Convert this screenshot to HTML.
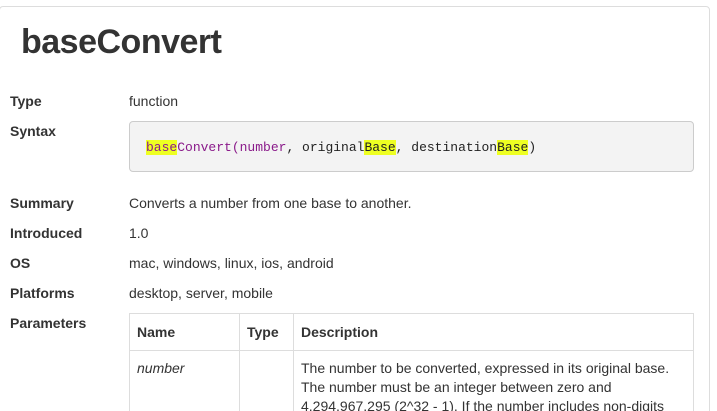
<!DOCTYPE html>
<html><head><meta charset="utf-8"><style>
*{margin:0;padding:0;box-sizing:border-box}
html,body{width:717px;height:411px;overflow:hidden}
body{background:#fff;font-family:"Liberation Sans",sans-serif;color:#333;font-size:14px;position:relative}
.panel{position:absolute;left:-1px;top:6px;width:711px;height:420px;border:1px solid #ddd;border-radius:4px}
h1{position:absolute;left:21px;top:23px;font-size:34px;font-weight:bold;color:#333;letter-spacing:-0.5px}
.l{position:absolute;left:10px;font-weight:bold;font-size:14px;color:#333}
.v{position:absolute;left:129px;font-size:14px;color:#333}
.code{position:absolute;left:129px;top:121px;width:565px;height:51px;background:#f3f3f3;border:1px solid #ccc;border-radius:4px;font-family:"Liberation Mono",monospace;font-size:13px;padding:18px 0 0 16px;color:#222}
.p{color:#8a1a8a}.h{background:#eeff22}
table{position:absolute;left:129px;top:313px;width:565px;border-collapse:collapse;font-size:14px}
td,th{border:1px solid #ddd;text-align:left;vertical-align:top;padding:8px 7px;line-height:19px}
th{height:37px;padding-top:9px}
</style></head><body>
<div class="panel"></div>
<h1>baseConvert</h1>
<div class="l" style="top:93px">Type</div><div class="v" style="top:93px">function</div>
<div class="l" style="top:123px">Syntax</div>
<div class="code"><span class="p"><span class="h">base</span>Convert(number</span>, original<span class="h">Base</span>, destination<span class="h">Base</span>)</div>
<div class="l" style="top:195px">Summary</div><div class="v" style="top:195px">Converts a number from one base to another.</div>
<div class="l" style="top:225px">Introduced</div><div class="v" style="top:225px">1.0</div>
<div class="l" style="top:255px">OS</div><div class="v" style="top:255px">mac, windows, linux, ios, android</div>
<div class="l" style="top:285px">Platforms</div><div class="v" style="top:285px">desktop, server, mobile</div>
<div class="l" style="top:315px">Parameters</div>
<table>
<tr><th style="width:110px">Name</th><th style="width:54px">Type</th><th>Description</th></tr>
<tr><td style="font-style:italic">number</td><td></td><td>The number to be converted, expressed in its original base. The number must be an integer between zero and 4,294,967,295 (2^32 - 1). If the number includes non-digits</td></tr>
</table>
</body></html>
